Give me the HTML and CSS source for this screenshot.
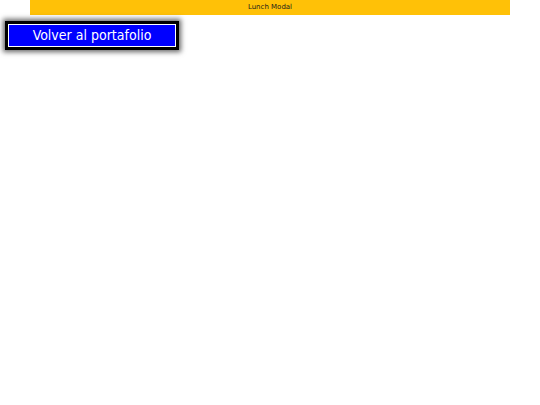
FILE: index.html
```html
<!DOCTYPE html>
<html>
<head>
<meta charset="utf-8">
<link rel="stylesheet" href="styles.css">
</head>
<body>
<header class="topbar">Lunch Modal</header>
<div class="actions">
  <button class="back-btn">Volver al portafolio</button>
</div>
</body>
</html>
```
FILE: styles.css
```css
html, body {
  margin: 0;
  padding: 0;
  background: #ffffff;
}
body {
  min-height: 405px;
}
.topbar {
  width: 480px;
  height: 15px;
  margin: 0 auto;
  background: #ffc107;
  font-family: "DejaVu Sans", sans-serif;
  font-size: 7px;
  line-height: 15px;
  text-align: center;
  color: #1a1a1a;
}
.actions {
  padding: 9px 0 0 8px;
}
.back-btn {
  display: block;
  box-sizing: border-box;
  width: 168px;
  height: 23px;
  padding: 0;
  margin: 0;
  background: #0000ff;
  color: #ffffff;
  border: 1px solid #ffffff;
  box-shadow: 0 0 0 3px #000000, 0 0 5px 5px rgba(0, 0, 0, 0.6);
  font-family: "DejaVu Sans Condensed", "DejaVu Sans", sans-serif;
  font-stretch: condensed;
  font-size: 14px;
  line-height: 21px;
  text-align: center;
}
```
